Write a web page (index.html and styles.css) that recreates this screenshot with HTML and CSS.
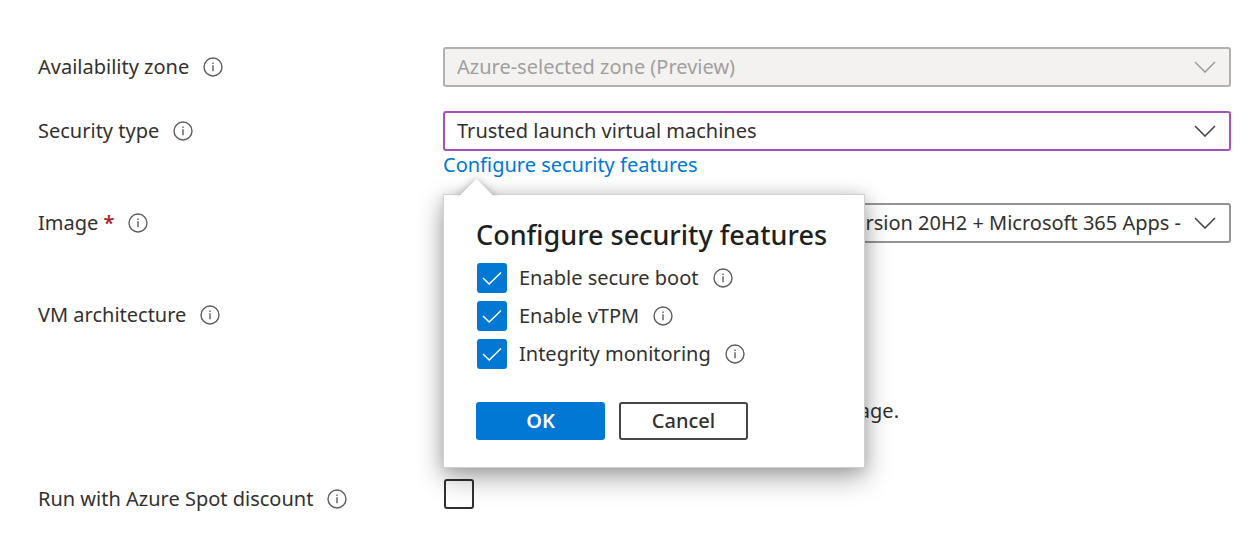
FILE: index.html
```html
<!DOCTYPE html>
<html lang="en">
<head>
<meta charset="utf-8">
<meta name="viewport" content="width=device-width, initial-scale=1">
<title>Create a virtual machine</title>
<link rel="stylesheet" href="styles.css">
</head>
<body>
<svg class="sprite" aria-hidden="true">
  <symbol id="info" viewBox="0 0 20 20"><circle cx="10" cy="10" r="9" fill="none" stroke="currentColor" stroke-width="1.4"/><path d="M10 8.3v6M10 5.5v1.6" fill="none" stroke="currentColor" stroke-width="1.4"/></symbol>
  <symbol id="chevron" viewBox="0 0 22 12"><path d="M1 1l10 10L21 1" fill="none" stroke="currentColor" stroke-width="1.6"/></symbol>
</svg>
<form class="form">
  <div class="row">
    <div class="label"><label for="zone">Availability zone</label><button type="button" class="info" aria-label="About availability zone"><svg><use href="#info"/></svg></button></div>
    <div class="select">
      <select id="zone" disabled><option>Azure-selected zone (Preview)</option></select>
      <svg class="chevron"><use href="#chevron"/></svg>
    </div>
  </div>

  <div class="row">
    <div class="label"><label for="security">Security type</label><button type="button" class="info" aria-label="About security type"><svg><use href="#info"/></svg></button></div>
    <div class="field">
      <div class="select edited">
        <select id="security"><option>Trusted launch virtual machines</option></select>
        <svg class="chevron"><use href="#chevron"/></svg>
      </div>
      <a class="link" href="#features">Configure security features</a>
      <div class="callout" id="features" role="dialog" aria-labelledby="features-title">
        <h2 class="title" id="features-title">Configure security features</h2>
        <div class="checks">
          <div class="check"><input type="checkbox" class="box" id="boot" checked><label for="boot">Enable secure boot</label><button type="button" class="info" aria-label="About secure boot"><svg><use href="#info"/></svg></button></div>
          <div class="check"><input type="checkbox" class="box" id="vtpm" checked><label for="vtpm">Enable vTPM</label><button type="button" class="info" aria-label="About vTPM"><svg><use href="#info"/></svg></button></div>
          <div class="check"><input type="checkbox" class="box" id="integrity" checked><label for="integrity">Integrity monitoring</label><button type="button" class="info" aria-label="About integrity monitoring"><svg><use href="#info"/></svg></button></div>
        </div>
        <div class="actions">
          <button type="button" class="button primary">OK</button>
          <button type="button" class="button">Cancel</button>
        </div>
      </div>
    </div>
  </div>

  <div class="row image">
    <div class="label"><label for="image">Image <span class="required">*</span></label><button type="button" class="info" aria-label="About image"><svg><use href="#info"/></svg></button></div>
    <div class="select">
      <select id="image"><option>Version 20H2 + Microsoft 365 Apps -</option></select>
      <svg class="chevron"><use href="#chevron"/></svg>
    </div>
  </div>

  <div class="row architecture">
    <div class="label"><span>VM architecture</span><button type="button" class="info" aria-label="About VM architecture"><svg><use href="#info"/></svg></button></div>
    <p class="note">image.</p>
  </div>

  <div class="row">
    <div class="label"><label for="spot">Run with Azure Spot discount</label><button type="button" class="info" aria-label="About Azure Spot discount"><svg><use href="#info"/></svg></button></div>
    <input type="checkbox" class="box" id="spot">
  </div>
</form>
</body>
</html>
```
FILE: styles.css
```css
* { box-sizing: border-box; }

body {
  margin: 0;
  background: #fff;
  color: #323130;
  font: 20px/28px "Segoe UI", "Noto Sans", "Open Sans", sans-serif;
}

.sprite { display: none; }

.form {
  display: flex;
  flex-direction: column;
  gap: 24px;
  padding: 47px 28px 40px 38px;
}

.row {
  display: grid;
  grid-template-columns: 405px minmax(0, 1fr);
  align-items: start;
}

.image { margin-bottom: 28px; }

.label {
  display: flex;
  align-items: center;
  gap: 14px;
  height: 40px;
}

.required {
  color: #a4262c;
  font-weight: 600;
}

.info {
  display: block;
  width: 20px;
  height: 20px;
  padding: 0;
  border: 0;
  background: none;
  color: #605e5c;
}

.info svg {
  display: block;
  width: 20px;
  height: 20px;
}

.field { position: relative; }

.select {
  display: grid;
  align-items: center;
}

.select select {
  grid-area: 1 / 1;
  width: 100%;
  height: 40px;
  padding: 0 48px 0 12px;
  appearance: none;
  border: 2px solid #979593;
  border-radius: 3px;
  background: #fff;
  color: #323130;
  font: inherit;
}

.image select { text-align: right; }

.select select:disabled {
  border-color: #b3b1af;
  background: #f3f2f1;
  color: #a19f9d;
  opacity: 1;
}

.edited select { border-color: #a450bd; }

.chevron {
  grid-area: 1 / 1;
  justify-self: end;
  width: 22px;
  height: 12px;
  margin-right: 15px;
  color: #484644;
  pointer-events: none;
}

select:disabled + .chevron { color: #a19f9d; }

.link {
  display: block;
  color: #0078d4;
  text-decoration: none;
}

.callout {
  position: absolute;
  top: 83px;
  left: 0;
  z-index: 1;
  width: 422px;
  padding: 24px 32px 27px;
  border: 1px solid #d2d0ce;
  background: #fff;
  box-shadow: 0 10px 26px rgba(0, 0, 0, 0.32), 0 2px 14px rgba(0, 0, 0, 0.16);
}

.callout::before {
  content: "";
  position: absolute;
  top: -11px;
  left: 20px;
  width: 25px;
  height: 25px;
  background: #fff;
  box-shadow: 0 0 8px rgba(0, 0, 0, 0.3);
  clip-path: polygon(-10px -10px, 35px -10px, -10px 35px);
  transform: rotate(45deg);
}

.title {
  margin: 0;
  color: #201f1e;
  font-size: 27px;
  font-weight: 500;
  line-height: 32px;
  white-space: nowrap;
}

.checks {
  display: flex;
  flex-direction: column;
  gap: 8px;
  margin-top: 12px;
}

.check {
  display: flex;
  align-items: center;
}

.check .info { margin-left: 14px; }
.check label { margin-left: 12px; }

.box {
  width: 30px;
  height: 30px;
  margin: 0 0 0 1px;
  appearance: none;
  border: 2px solid #323130;
  border-radius: 3px;
  background: transparent;
}

.box:checked {
  border-color: #0078d4;
  background: #0078d4 url("data:image/svg+xml,%3Csvg xmlns='http://www.w3.org/2000/svg' viewBox='0 0 20 14'%3E%3Cpath d='M1 7l6.2 6L19 1.5' fill='none' stroke='white' stroke-width='1.5'/%3E%3C/svg%3E") center / 20px 14px no-repeat;
}

.actions {
  display: flex;
  gap: 14px;
  margin-top: 33px;
}

.button {
  width: 129px;
  height: 38px;
  padding: 0;
  border: 2px solid #484644;
  border-radius: 3px;
  background: #fff;
  color: #323130;
  font: inherit;
  font-weight: 500;
}

.primary {
  border-color: #0078d4;
  background: #0078d4;
  color: #fff;
  font-weight: 600;
}

.architecture { min-height: 160px; }

.note {
  width: 456px;
  margin: 102px 0 0;
  text-align: right;
}
```
